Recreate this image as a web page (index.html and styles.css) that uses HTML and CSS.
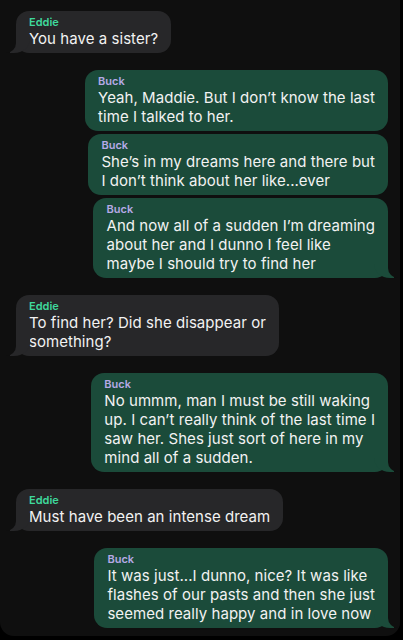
FILE: index.html
```html
<!DOCTYPE html>
<html lang="en">
<head>
    <meta charset="UTF-8">
    <meta name="viewport" content="width=device-width, initial-scale=1.0">
    <title>Eddie &amp; Buck</title>
    <link rel="stylesheet" href="styles.css">
</head>
<body>
<div class="screen">
    <div class="msg them tail">
        <div class="name">Eddie</div>
        <div class="text">You have a sister?</div>
    </div>

    <div class="msg me group-start">
        <div class="name">Buck</div>
        <div class="text">Yeah, Maddie. But I don’t know the last<br>time I talked to her.</div>
    </div>
    <div class="msg me">
        <div class="name">Buck</div>
        <div class="text">She’s in my dreams here and there but<br>I don’t think about her like...ever</div>
    </div>
    <div class="msg me tail">
        <div class="name">Buck</div>
        <div class="text">And now all of a sudden I’m dreaming<br>about her and I dunno I feel like<br>maybe I should try to find her</div>
    </div>

    <div class="msg them tail group-start">
        <div class="name">Eddie</div>
        <div class="text">To find her? Did she disappear or<br>something?</div>
    </div>

    <div class="msg me tail group-start">
        <div class="name">Buck</div>
        <div class="text">No ummm, man I must be still waking<br>up. I can’t really think of the last time I<br>saw her. Shes just sort of here in my<br>mind all of a sudden.</div>
    </div>

    <div class="msg them tail group-start">
        <div class="name">Eddie</div>
        <div class="text">Must have been an intense dream</div>
    </div>

    <div class="msg me tail group-start">
        <div class="name">Buck</div>
        <div class="text">It was just...I dunno, nice? It was like<br>flashes of our pasts and then she just<br>seemed really happy and in love now</div>
    </div>
</div>
</body>
</html>
```

FILE: styles.css
```css
body {
    margin: 0;
    background-color: #000;
    font-family: Inter, "Noto Sans", sans-serif;
    color: #f2f2f2;
}
.screen {
    width: 400px;
    height: 636px;
    background-color: #0f0f0f;
    border-radius: 0 0 14px 14px;
    overflow: hidden;
    display: flex;
    flex-direction: column;
    padding: 11px 12px 0 16px;
    box-sizing: border-box;
}
.msg {
    position: relative;
    padding: 5px 13px 5px 13px;
    border-radius: 13px;
    margin-top: 3px;
    white-space: nowrap;
}
.msg.group-start {
    margin-top: 17px;
}
.msg:first-child {
    margin-top: 0;
}
.them {
    align-self: flex-start;
    background-color: #272729;
}
.me {
    align-self: flex-end;
    background-color: #1b4b3a;
}
.name {
    font-size: 11px;
    font-weight: 600;
    line-height: 13px;
}
.them .name {
    color: #3fd99c;
}
.me .name {
    color: #b5a9e6;
}
.text {
    font-size: 15px;
    line-height: 19px;
    letter-spacing: 0.05px;
}

/* tails */
.tail::before,
.tail::after {
    content: "";
    position: absolute;
    bottom: 0;
    height: 18px;
}
.me.tail::before {
    right: -6px;
    width: 20px;
    background-color: #1b4b3a;
    border-bottom-left-radius: 16px 14px;
}
.me.tail::after {
    right: -26px;
    width: 26px;
    background-color: #0f0f0f;
    border-bottom-left-radius: 10px;
}
.them.tail::before {
    left: -6px;
    width: 20px;
    background-color: #272729;
    border-bottom-right-radius: 16px 14px;
}
.them.tail::after {
    left: -26px;
    width: 26px;
    background-color: #0f0f0f;
    border-bottom-right-radius: 10px;
}
```
